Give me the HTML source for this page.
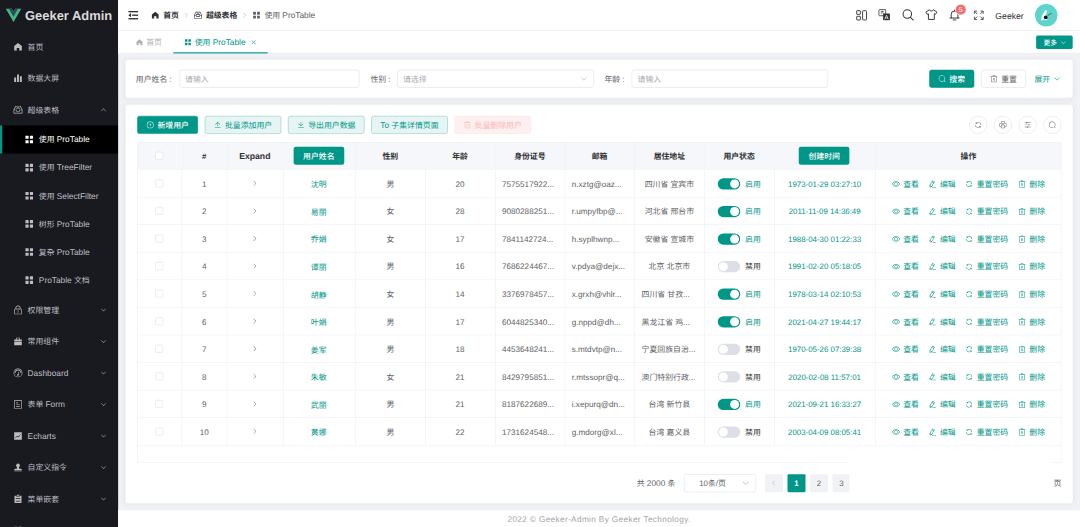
<!DOCTYPE html>
<html lang="zh-CN"><head><meta charset="utf-8"><title>Geeker Admin</title>
<style>
*{box-sizing:border-box;margin:0;padding:0}
html,body{width:1080px;height:527px;overflow:hidden;background:#fff}
body{text-rendering:geometricPrecision;font-family:"Liberation Sans","Noto Sans CJK SC",sans-serif;font-size:14px;color:#303133}
#app{position:absolute;left:0;top:0;width:1920px;height:937px;transform:scale(.5625);transform-origin:0 0;display:flex;overflow:hidden;background:#f0f2f5}
.ic{display:inline-block;vertical-align:middle;flex:none}
/* sidebar */
.aside{width:210px;height:937px;background:#191a20;flex:none;overflow:hidden}
.logo{height:55px;display:flex;align-items:center;justify-content:center}
.logo span{font-size:23px;font-weight:bold;color:#dadada;margin-left:6px;white-space:nowrap}
.mi{height:56px;display:flex;align-items:center;padding:0 20px;color:#bdbdc0;position:relative;white-space:nowrap}
.mi .mic{margin:0 8px 0 3px;width:18px;height:18px}
.mi.sub{height:50px;padding-left:40px}
.mi.act{background:#000;color:#fff}
.mi.act:before{content:"";position:absolute;left:0;top:0;bottom:0;width:4px;background:#009688}
.mi .marrow{position:absolute;right:20px;top:50%;margin-top:-6px}
/* right */
.right{flex:1;display:flex;flex-direction:column;min-width:0;height:937px}
.header{height:55px;background:#fff;border-bottom:1px solid #e4e7ed;display:flex;align-items:center;justify-content:space-between;padding:0 15px 0 18px;flex:none}
.hl{display:flex;align-items:center}
.bc{display:flex;align-items:center;margin-left:22px}
.bc .it{display:flex;align-items:center;color:#303133;font-weight:bold}
.bc .it .ic{margin-right:6px}
.bc .it.last{color:#606266;font-weight:normal}
.bc .sep{margin:0 7px;color:#a8abb2;display:flex}
.hr{display:flex;align-items:center;padding-right:25px}
.hr .hi{width:22px;height:22px;margin-left:20px;color:#303133;position:relative;top:-1.5px}
.hr .user{position:relative;top:1.5px;font-size:15.4px;margin:0 20px 0 19px;color:#303133}
.hr .avatar{width:40px;height:40px;border-radius:50%;background:#5fd4cd;position:relative;overflow:hidden}
.badge{position:absolute;left:11.5px;top:-7.5px;background:#f56c6c;color:#fff;border-radius:10px;height:20px;min-width:20px;font-size:12.5px;line-height:18px;text-align:center;border:1px solid #fff;padding:0 4px}
/* tabs */
.tabs{height:40px;background:#fff;display:flex;align-items:center;justify-content:space-between;padding:0 0 0 13px;flex:none;position:relative}
.tabs:after{content:"";position:absolute;left:0;right:0;bottom:0;height:1px;background:#e4e7ed}
.tab{height:40px;display:inline-flex;align-items:center;padding:0 19.7px 0 18px;color:#afafaf;position:relative}
.tab .ic{margin-right:5px}
.tab.act{color:#009688}
.tab.act:after{content:"";position:absolute;left:0;right:0;bottom:0;height:2px;background:#009688;z-index:1}
.tab .x{margin-left:8.4px;margin-right:0}
.more{margin-right:13px;height:24px;background:#009688;color:#fff;border-radius:3px;font-size:12px;display:flex;align-items:center;padding:0 11px 0 13px}
.more .ic{margin-left:6px}
/* main */
.main{flex:1;padding:10px 12px;display:flex;flex-direction:column;min-height:0}
.card{background:#fff;border:1px solid #e4e7ed;border-radius:6px;box-shadow:0 0 12px rgba(0,0,0,.05)}
.search{height:70px;padding:18px 18px 0;display:flex;margin-bottom:10px;flex:none;position:relative}
.fi{display:flex;align-items:center;height:32px;position:absolute;top:18px}
.fi label{color:#606266;white-space:nowrap}
.inp{height:32px;border:1px solid #dcdfe6;border-radius:4px;display:flex;align-items:center;padding:0 9px;color:#a8abb2;position:absolute;top:18px}
.selarr{position:absolute;right:10px;top:8px;color:#a8abb2}
.ml{margin-left:5px}
.btn{vertical-align:top;height:32px;border-radius:4px;border:1px solid #dcdfe6;display:inline-flex;align-items:center;justify-content:center;padding:0 15px;color:#606266;background:#fff;white-space:nowrap}
.btn .ic{margin-right:6px}
.btn.pri{background:#009688;border-color:#009688;color:#fff}
.btn.plain{background:#e6f5f3;border-color:#80cbc4;color:#009688}
.btn.dang{background:#fef0f0;border-color:#fde2e2;color:#fab6b6}
.tcard{flex:1;padding:20px 20px 20px 21px;display:flex;flex-direction:column;position:relative;min-height:0}
.thead{display:flex;justify-content:space-between;margin-bottom:15px;height:32px;flex:none}
.thead .l .btn{margin-right:12px}
.cbtn{width:32px;height:32px;border-radius:50%;border:1px solid #dcdfe6;display:inline-flex;align-items:center;justify-content:center;margin-left:12px;color:#606266}
.twrap{flex:1;position:relative;min-height:0}
.twrap:after{content:"";position:absolute;left:0;top:0;right:0;bottom:0;border:1px solid #ebeef5;pointer-events:none}
table{border-collapse:collapse;table-layout:fixed;width:100%}
th,td{border-right:1px solid #ebeef5;border-bottom:1px solid #ebeef5;text-align:center;white-space:nowrap;overflow:hidden;padding:0}
th:last-child,td:last-child{border-right:none}
th{height:48px;background:#f5f7fa;font-weight:bold;color:#303133;font-size:14px}
td{height:49px;color:#606266;font-size:14px}
.cb{display:inline-block;width:14px;height:14px;border:1px solid #dcdfe6;border-radius:2px;background:#fff;vertical-align:middle}
.exp{color:#606266}
.lnk{color:#009688}
.dt{color:#009688}
.sw{display:inline-block;width:40px;height:20px;border-radius:10px;background:#dcdfe6;position:relative;vertical-align:middle}
.sw i{position:absolute;left:2px;top:2px;width:16px;height:16px;border-radius:50%;background:#fff}
.sw.on{background:#009688}
.sw.on i{left:22px}
.swl{margin-left:9px;vertical-align:middle;color:#303133}
.swl.on{color:#009688}
.op{color:#009688;margin:0 8.7px;display:inline-flex;align-items:center}
.op b{font-weight:normal;margin-left:6px}
.hbtn{display:inline-flex;height:32px;align-items:center;justify-content:center;width:90px;position:relative;left:-.7px;padding:0;background:#009688;color:#fff;border-radius:4px;font-weight:normal}
.pager{height:32px;margin-top:20.5px;display:flex;justify-content:flex-start;padding-left:888px;align-items:center;flex:none;color:#606266;position:relative}
.pager .total{width:84px;flex:none;white-space:nowrap}
.pager .sel{width:127.5px;flex:none;height:32px;border:1px solid #dcdfe6;border-radius:4px;display:flex;align-items:center;justify-content:center;position:relative;margin-right:12.5px}
.pager .pb{min-width:32px;flex:none;height:32px;background:#f0f2f5;border-radius:2px;margin:0 4px;display:flex;align-items:center;justify-content:center;color:#606266}
.pager .pb.act{background:#009688;color:#fff;font-weight:bold}
.pager .pb.dis{color:#a8abb2}
.cover{position:absolute;background:#fff}
.footer{height:31px;background:#fff;border-top:1px solid #e4e7ed;display:flex;align-items:center;justify-content:center;color:#a3a5aa;flex:none;font-size:14.6px;letter-spacing:.65px;padding-top:3px}

.en{font-size:1.06em}
td{padding-top:2px}
.num{font-size:14.45px;padding-top:4.5px}
.ell{text-align:left;padding-left:12px}
.lnk span{position:relative;top:1px;left:-1px}
.cb{position:relative;top:-1.7px}
.exp{position:relative;top:-1.6px}
.mi.lastmi span{position:relative;top:3px}
th .cb{top:-.5px}
.btn.pri,.hbtn,.more{font-weight:500}
.btn .en{position:relative;top:1px}

</style></head><body>
<div id="app">
<div class="aside"><div class="logo"><svg class="vlogo" viewBox="0 0 256 221" width="28" height="24.5"><path fill="#41b883" d="M204.8 0H256L128 220.8 0 0h97.92L128 51.2 157.44 0h47.36z"/><path fill="#35495e" d="M50.56 0 128 133.12 204.8 0h-47.36L128 51.2 97.92 0H50.56z"/></svg><span>Geeker Admin</span></div><div class="menu"><div class="mi"><svg class="ic mic" viewBox="0 0 1024 1024" width="18" height="18" style="" fill="currentColor"><path d="M512 128 128 447.9V896h255.9V640h256.2v256H896V447.9z"/></svg><span>首页</span></div><div class="mi"><svg class="ic mic" viewBox="0 0 1024 1024" width="18" height="18" style="" fill="currentColor"><path d="M416 896V128h192v768H416zm-288 0V448h192v448H128zm576 0V320h192v576H704z"/></svg><span>数据大屏</span></div><div class="mi"><svg class="ic mic" viewBox="0 0 1024 1024" width="18" height="18" style="" fill="currentColor"><path fill-rule="evenodd" d="M288 384h448v64H288v-64zm96-128h256v64H384v-64zM131.456 512H384v128h256V512h252.544L721.856 192H302.144L131.456 512zM896 576H704v128H320V576H128v256h768V576zM275.776 128h472.448a32 32 0 0 1 28.608 17.664l179.84 359.552A32 32 0 0 1 960 519.552V864a32 32 0 0 1-32 32H96a32 32 0 0 1-32-32V519.552a32 32 0 0 1 3.392-14.336l179.776-359.552A32 32 0 0 1 275.776 128z"/></svg><span>超级表格</span><svg class="ic marrow" viewBox="0 0 1024 1024" width="12" height="12" style="" fill="currentColor"><path d="m488.832 344.32-339.84 356.672a32 32 0 0 0 0 44.16l.384.384a29.44 29.44 0 0 0 42.688 0l320-335.872 319.872 335.872a29.44 29.44 0 0 0 42.688 0l.384-.384a32 32 0 0 0 0-44.16L535.168 344.32a32 32 0 0 0-46.336 0z"/></svg></div><div class="mi sub act"><svg class="ic mic" viewBox="0 0 1024 1024" width="18" height="18" style="" fill="currentColor"><path d="M160 448a32 32 0 0 1-32-32V160a32 32 0 0 1 32-32h256a32 32 0 0 1 32 32v256a32 32 0 0 1-32 32H160zm448 0a32 32 0 0 1-32-32V160a32 32 0 0 1 32-32h256a32 32 0 0 1 32 32v256a32 32 0 0 1-32 32H608zM160 896a32 32 0 0 1-32-32V608a32 32 0 0 1 32-32h256a32 32 0 0 1 32 32v256a32 32 0 0 1-32 32H160zm448 0a32 32 0 0 1-32-32V608a32 32 0 0 1 32-32h256a32 32 0 0 1 32 32v256a32 32 0 0 1-32 32H608z"/></svg><span>使用 <span class="en">ProTable</span></span></div><div class="mi sub"><svg class="ic mic" viewBox="0 0 1024 1024" width="18" height="18" style="" fill="currentColor"><path d="M160 448a32 32 0 0 1-32-32V160a32 32 0 0 1 32-32h256a32 32 0 0 1 32 32v256a32 32 0 0 1-32 32H160zm448 0a32 32 0 0 1-32-32V160a32 32 0 0 1 32-32h256a32 32 0 0 1 32 32v256a32 32 0 0 1-32 32H608zM160 896a32 32 0 0 1-32-32V608a32 32 0 0 1 32-32h256a32 32 0 0 1 32 32v256a32 32 0 0 1-32 32H160zm448 0a32 32 0 0 1-32-32V608a32 32 0 0 1 32-32h256a32 32 0 0 1 32 32v256a32 32 0 0 1-32 32H608z"/></svg><span>使用 <span class="en">TreeFilter</span></span></div><div class="mi sub"><svg class="ic mic" viewBox="0 0 1024 1024" width="18" height="18" style="" fill="currentColor"><path d="M160 448a32 32 0 0 1-32-32V160a32 32 0 0 1 32-32h256a32 32 0 0 1 32 32v256a32 32 0 0 1-32 32H160zm448 0a32 32 0 0 1-32-32V160a32 32 0 0 1 32-32h256a32 32 0 0 1 32 32v256a32 32 0 0 1-32 32H608zM160 896a32 32 0 0 1-32-32V608a32 32 0 0 1 32-32h256a32 32 0 0 1 32 32v256a32 32 0 0 1-32 32H160zm448 0a32 32 0 0 1-32-32V608a32 32 0 0 1 32-32h256a32 32 0 0 1 32 32v256a32 32 0 0 1-32 32H608z"/></svg><span>使用 <span class="en">SelectFilter</span></span></div><div class="mi sub"><svg class="ic mic" viewBox="0 0 1024 1024" width="18" height="18" style="" fill="currentColor"><path d="M160 448a32 32 0 0 1-32-32V160a32 32 0 0 1 32-32h256a32 32 0 0 1 32 32v256a32 32 0 0 1-32 32H160zm448 0a32 32 0 0 1-32-32V160a32 32 0 0 1 32-32h256a32 32 0 0 1 32 32v256a32 32 0 0 1-32 32H608zM160 896a32 32 0 0 1-32-32V608a32 32 0 0 1 32-32h256a32 32 0 0 1 32 32v256a32 32 0 0 1-32 32H160zm448 0a32 32 0 0 1-32-32V608a32 32 0 0 1 32-32h256a32 32 0 0 1 32 32v256a32 32 0 0 1-32 32H608z"/></svg><span>树形 <span class="en">ProTable</span></span></div><div class="mi sub"><svg class="ic mic" viewBox="0 0 1024 1024" width="18" height="18" style="" fill="currentColor"><path d="M160 448a32 32 0 0 1-32-32V160a32 32 0 0 1 32-32h256a32 32 0 0 1 32 32v256a32 32 0 0 1-32 32H160zm448 0a32 32 0 0 1-32-32V160a32 32 0 0 1 32-32h256a32 32 0 0 1 32 32v256a32 32 0 0 1-32 32H608zM160 896a32 32 0 0 1-32-32V608a32 32 0 0 1 32-32h256a32 32 0 0 1 32 32v256a32 32 0 0 1-32 32H160zm448 0a32 32 0 0 1-32-32V608a32 32 0 0 1 32-32h256a32 32 0 0 1 32 32v256a32 32 0 0 1-32 32H608z"/></svg><span>复杂 <span class="en">ProTable</span></span></div><div class="mi sub"><svg class="ic mic" viewBox="0 0 1024 1024" width="18" height="18" style="" fill="currentColor"><path d="M160 448a32 32 0 0 1-32-32V160a32 32 0 0 1 32-32h256a32 32 0 0 1 32 32v256a32 32 0 0 1-32 32H160zm448 0a32 32 0 0 1-32-32V160a32 32 0 0 1 32-32h256a32 32 0 0 1 32 32v256a32 32 0 0 1-32 32H608zM160 896a32 32 0 0 1-32-32V608a32 32 0 0 1 32-32h256a32 32 0 0 1 32 32v256a32 32 0 0 1-32 32H160zm448 0a32 32 0 0 1-32-32V608a32 32 0 0 1 32-32h256a32 32 0 0 1 32 32v256a32 32 0 0 1-32 32H608z"/></svg><span><span class="en">ProTable</span> 文档</span></div><div class="mi"><svg class="ic mic" viewBox="0 0 1024 1024" width="18" height="18" style="" fill="currentColor"><path d="M224 448a32 32 0 0 0-32 32v384a32 32 0 0 0 32 32h576a32 32 0 0 0 32-32V480a32 32 0 0 0-32-32H224zm0-64h576a96 96 0 0 1 96 96v384a96 96 0 0 1-96 96H224a96 96 0 0 1-96-96V480a96 96 0 0 1 96-96z"/><path d="M512 544a32 32 0 0 1 32 32v192a32 32 0 1 1-64 0V576a32 32 0 0 1 32-32zm192-160v-64a192 192 0 1 0-384 0v64h384zM512 64a256 256 0 0 1 256 256v128H256V320A256 256 0 0 1 512 64z"/></svg><span>权限管理</span><svg class="ic marrow" viewBox="0 0 1024 1024" width="12" height="12" style="" fill="currentColor"><path d="M831.872 340.864 512 652.672 192.128 340.864a30.592 30.592 0 0 0-42.752 0 29.12 29.12 0 0 0 0 41.6L489.664 714.24a32 32 0 0 0 44.672 0l340.288-331.712a29.12 29.12 0 0 0 0-41.728 30.592 30.592 0 0 0-42.752 0z"/></svg></div><div class="mi"><svg class="ic mic" viewBox="0 0 1024 1024" width="18" height="18" style="" fill="currentColor"><path d="M320 320V128h384v192h192v192H128V320h192zM128 576h768v320H128V576zm256-256h256.064V192H384v128z"/></svg><span>常用组件</span><svg class="ic marrow" viewBox="0 0 1024 1024" width="12" height="12" style="" fill="currentColor"><path d="M831.872 340.864 512 652.672 192.128 340.864a30.592 30.592 0 0 0-42.752 0 29.12 29.12 0 0 0 0 41.6L489.664 714.24a32 32 0 0 0 44.672 0l340.288-331.712a29.12 29.12 0 0 0 0-41.728 30.592 30.592 0 0 0-42.752 0z"/></svg></div><div class="mi"><svg class="ic mic" viewBox="0 0 1024 1024" width="18" height="18" style="" fill="currentColor"><path d="M512 896a384 384 0 1 0 0-768 384 384 0 0 0 0 768zm0 64a448 448 0 1 1 0-896 448 448 0 0 1 0 896z"/><path d="M192 512a320 320 0 1 1 640 0 32 32 0 1 1-64 0 256 256 0 1 0-512 0 32 32 0 0 1-64 0z"/><path d="M570.432 627.84A96 96 0 1 1 509.568 608l60.992-187.776A32 32 0 1 1 631.424 440l-60.992 187.776zM502.08 734.464a32 32 0 1 0 19.84-60.928 32 32 0 0 0-19.84 60.928z"/></svg><span><span class="en">Dashboard</span></span><svg class="ic marrow" viewBox="0 0 1024 1024" width="12" height="12" style="" fill="currentColor"><path d="M831.872 340.864 512 652.672 192.128 340.864a30.592 30.592 0 0 0-42.752 0 29.12 29.12 0 0 0 0 41.6L489.664 714.24a32 32 0 0 0 44.672 0l340.288-331.712a29.12 29.12 0 0 0 0-41.728 30.592 30.592 0 0 0-42.752 0z"/></svg></div><div class="mi"><svg class="ic mic" viewBox="0 0 1024 1024" width="18" height="18" style="" fill="currentColor"><path d="M192 128v768h640V128H192zm-32-64h704a32 32 0 0 1 32 32v832a32 32 0 0 1-32 32H160a32 32 0 0 1-32-32V96a32 32 0 0 1 32-32zm160 448h384v64H320v-64zm0-192h192v64H320v-64zm0 384h384v64H320v-64z"/></svg><span>表单 <span class="en">Form</span></span><svg class="ic marrow" viewBox="0 0 1024 1024" width="12" height="12" style="" fill="currentColor"><path d="M831.872 340.864 512 652.672 192.128 340.864a30.592 30.592 0 0 0-42.752 0 29.12 29.12 0 0 0 0 41.6L489.664 714.24a32 32 0 0 0 44.672 0l340.288-331.712a29.12 29.12 0 0 0 0-41.728 30.592 30.592 0 0 0-42.752 0z"/></svg></div><div class="mi"><svg class="ic mic" viewBox="0 0 1024 1024" width="18" height="18" style="" fill="currentColor"><path d="M128 896V128h768v768H128zm291.712-327.296 128 102.4 180.16-201.792-47.744-42.624-139.84 156.608-128-102.4-180.16 201.792 47.744 42.624 139.84-156.608zM816 352a48 48 0 1 0-96 0 48 48 0 0 0 96 0z"/></svg><span><span class="en">Echarts</span></span><svg class="ic marrow" viewBox="0 0 1024 1024" width="12" height="12" style="" fill="currentColor"><path d="M831.872 340.864 512 652.672 192.128 340.864a30.592 30.592 0 0 0-42.752 0 29.12 29.12 0 0 0 0 41.6L489.664 714.24a32 32 0 0 0 44.672 0l340.288-331.712a29.12 29.12 0 0 0 0-41.728 30.592 30.592 0 0 0-42.752 0z"/></svg></div><div class="mi"><svg class="ic mic" viewBox="0 0 1024 1024" width="18" height="18" style="" fill="currentColor"><path d="M624 475.968V640h144a128 128 0 0 1 128 128H128a128 128 0 0 1 128-128h144V475.968a192 192 0 1 1 224 0zM128 896v-64h768v64H128z"/></svg><span>自定义指令</span><svg class="ic marrow" viewBox="0 0 1024 1024" width="12" height="12" style="" fill="currentColor"><path d="M831.872 340.864 512 652.672 192.128 340.864a30.592 30.592 0 0 0-42.752 0 29.12 29.12 0 0 0 0 41.6L489.664 714.24a32 32 0 0 0 44.672 0l340.288-331.712a29.12 29.12 0 0 0 0-41.728 30.592 30.592 0 0 0-42.752 0z"/></svg></div><div class="mi"><svg class="ic mic" viewBox="0 0 1024 1024" width="18" height="18" style="" fill="currentColor"><path d="M704 192h160v736H160V192h160v64h384v-64zM288 512h448v-64H288v64zm0 256h448v-64H288v64zm96-576V96h256v96H384z"/></svg><span>菜单嵌套</span><svg class="ic marrow" viewBox="0 0 1024 1024" width="12" height="12" style="" fill="currentColor"><path d="M831.872 340.864 512 652.672 192.128 340.864a30.592 30.592 0 0 0-42.752 0 29.12 29.12 0 0 0 0 41.6L489.664 714.24a32 32 0 0 0 44.672 0l340.288-331.712a29.12 29.12 0 0 0 0-41.728 30.592 30.592 0 0 0-42.752 0z"/></svg></div><div class="mi lastmi"><svg class="ic mic" viewBox="0 0 1024 1024" width="18" height="18" style="" fill="currentColor"><path d="M160 448a32 32 0 0 1-32-32V160a32 32 0 0 1 32-32h256a32 32 0 0 1 32 32v256a32 32 0 0 1-32 32H160zm448 0a32 32 0 0 1-32-32V160a32 32 0 0 1 32-32h256a32 32 0 0 1 32 32v256a32 32 0 0 1-32 32H608zM160 896a32 32 0 0 1-32-32V608a32 32 0 0 1 32-32h256a32 32 0 0 1 32 32v256a32 32 0 0 1-32 32H160zm448 0a32 32 0 0 1-32-32V608a32 32 0 0 1 32-32h256a32 32 0 0 1 32 32v256a32 32 0 0 1-32 32H608z"/></svg><span>外部链接</span><svg class="ic marrow" viewBox="0 0 1024 1024" width="12" height="12" style="" fill="currentColor"><path d="M831.872 340.864 512 652.672 192.128 340.864a30.592 30.592 0 0 0-42.752 0 29.12 29.12 0 0 0 0 41.6L489.664 714.24a32 32 0 0 0 44.672 0l340.288-331.712a29.12 29.12 0 0 0 0-41.728 30.592 30.592 0 0 0-42.752 0z"/></svg></div></div></div>
<div class="right">
<div class="header">
 <div class="hl">
  <svg class="ic" viewBox="0 0 18 18" width="18" height="18" fill="#303133"><rect x="0" y="1.5" width="18" height="2.4"/><rect x="7" y="7.8" width="11" height="2.4"/><rect x="0" y="14.1" width="18" height="2.4"/><path d="M0 9 5 5.2v7.6z"/></svg>
  <div class="bc">
   <span class="it"><svg class="ic " viewBox="0 0 1024 1024" width="16" height="16" style="" fill="currentColor"><path d="M512 128 128 447.9V896h255.9V640h256.2v256H896V447.9z"/></svg><span>首页</span></span><span class="sep"><svg class="ic " viewBox="0 0 1024 1024" width="12" height="12" style="" fill="currentColor"><path d="M340.864 149.312a30.592 30.592 0 0 0 0 42.752L652.736 512 340.864 831.872a30.592 30.592 0 0 0 0 42.752 29.12 29.12 0 0 0 41.728 0L714.24 534.336a32 32 0 0 0 0-44.672L382.592 149.376a29.12 29.12 0 0 0-41.728 0z"/></svg></span>
   <span class="it"><svg class="ic " viewBox="0 0 1024 1024" width="16" height="16" style="" fill="currentColor"><path fill-rule="evenodd" d="M288 384h448v64H288v-64zm96-128h256v64H384v-64zM131.456 512H384v128h256V512h252.544L721.856 192H302.144L131.456 512zM896 576H704v128H320V576H128v256h768V576zM275.776 128h472.448a32 32 0 0 1 28.608 17.664l179.84 359.552A32 32 0 0 1 960 519.552V864a32 32 0 0 1-32 32H96a32 32 0 0 1-32-32V519.552a32 32 0 0 1 3.392-14.336l179.776-359.552A32 32 0 0 1 275.776 128z"/></svg><span>超级表格</span></span><span class="sep"><svg class="ic " viewBox="0 0 1024 1024" width="12" height="12" style="" fill="currentColor"><path d="M340.864 149.312a30.592 30.592 0 0 0 0 42.752L652.736 512 340.864 831.872a30.592 30.592 0 0 0 0 42.752 29.12 29.12 0 0 0 41.728 0L714.24 534.336a32 32 0 0 0 0-44.672L382.592 149.376a29.12 29.12 0 0 0-41.728 0z"/></svg></span>
   <span class="it last"><svg class="ic " viewBox="0 0 1024 1024" width="16" height="16" style="" fill="currentColor"><path d="M160 448a32 32 0 0 1-32-32V160a32 32 0 0 1 32-32h256a32 32 0 0 1 32 32v256a32 32 0 0 1-32 32H160zm448 0a32 32 0 0 1-32-32V160a32 32 0 0 1 32-32h256a32 32 0 0 1 32 32v256a32 32 0 0 1-32 32H608zM160 896a32 32 0 0 1-32-32V608a32 32 0 0 1 32-32h256a32 32 0 0 1 32 32v256a32 32 0 0 1-32 32H160zm448 0a32 32 0 0 1-32-32V608a32 32 0 0 1 32-32h256a32 32 0 0 1 32 32v256a32 32 0 0 1-32 32H608z"/></svg><span>使用 <span class="en">ProTable</span></span></span>
  </div>
 </div>
 <div class="hr">
  <span class="hi"><svg viewBox="0 0 22 22" width="22" height="22" style="overflow:visible" fill="none" stroke="#303133" stroke-width="1.600"><rect x="4" y="4" width="6.5" height="6.5" rx=".7"/><rect x="4" y="14" width="6.500" height="6.500" rx=".7"/><rect x="14.500" y="4" width="7" height="16.500" rx="1.5"/></svg></span>
  <span class="hi"><svg viewBox="0 0 22 22" width="22" height="22"><rect x="1.5" y="2" width="12" height="11" rx="1" fill="#fff" stroke="#303133" stroke-width="1.4"/><path d="M4.5 5.5h6M7.5 4v1.5M5 10l2.5-4.5L10 10" stroke="#303133" stroke-width="1" fill="none"/><rect x="9" y="9" width="12" height="12" rx=".7" fill="#303133"/><path d="M12 19l3-7 3 7M13 17h4" stroke="#fff" stroke-width="1.3" fill="none"/></svg></span>
  <span class="hi"><svg viewBox="0 0 22 22" width="22" height="22" fill="none" stroke="#303133" stroke-width="1.8"><circle cx="10" cy="10" r="7.6"/><path d="M15.6 15.8 20.5 20.8" stroke-linecap="round"/></svg></span>
  <span class="hi"><svg viewBox="0 0 22 22" width="22" height="22" fill="none" stroke="#303133" stroke-width="1.7" stroke-linejoin="round"><path d="M7 2.500 .800 6.500 3.500 10.500 5.500 9.500V19.500H16V9.500L18 10.500 20.700 6.500 14.500 2.500C13.500 5 8 5 7 2.500Z"/></svg></span>
  <span class="hi"><svg viewBox="0 0 22 22" width="22" height="22" fill="none" stroke="#303133" stroke-width="1.7" stroke-linecap="round" stroke-linejoin="round"><path d="M2 17h16M4 17V10.500a6 6 0 0 1 12 0V17M10 3V4.500M7.500 20.500h5"/></svg><span class="badge">5</span></span>
  <span class="hi"><svg viewBox="0 0 22 22" width="22" height="22" fill="none" stroke="#303133" stroke-width="1.6"><g transform="translate(1.500 2.600) scale(.87)"><path d="M2 8V2.5h5.5M2.5 3 8 8.5M14.500 2.5H20V8M19.500 3 14 8.500M20 14v5.500h-5.500M19.500 19 14 13.500M7.500 19.500H2V14M2.500 19 8 13.500"/></g></svg></span>
  <span class="user">Geeker</span>
  <span class="avatar"><svg viewBox="0 0 40 40" width="40" height="40"><path d="M18.500 10.500 21.500 13 19.500 19 21.500 29H17.500L16 26 14.500 29H10.500L12.500 21Z" fill="#fff"/><circle cx="19" cy="23.800" r="3.300" fill="#111"/><path d="M22.500 20.600 29.200 16.600" stroke="#222" stroke-width="1.100" fill="none"/></svg></span>
 </div>
</div>
<div class="tabs">
 <div>
  <span class="tab"><svg class="ic " viewBox="0 0 1024 1024" width="14" height="14" style="" fill="currentColor"><path d="M512 128 128 447.9V896h255.9V640h256.2v256H896V447.9z"/></svg><span>首页</span></span><span class="tab act" style="padding:0 19.1px 0 19.5px"><svg class="ic " viewBox="0 0 1024 1024" width="14" height="14" style="" fill="currentColor"><path d="M160 448a32 32 0 0 1-32-32V160a32 32 0 0 1 32-32h256a32 32 0 0 1 32 32v256a32 32 0 0 1-32 32H160zm448 0a32 32 0 0 1-32-32V160a32 32 0 0 1 32-32h256a32 32 0 0 1 32 32v256a32 32 0 0 1-32 32H608zM160 896a32 32 0 0 1-32-32V608a32 32 0 0 1 32-32h256a32 32 0 0 1 32 32v256a32 32 0 0 1-32 32H160zm448 0a32 32 0 0 1-32-32V608a32 32 0 0 1 32-32h256a32 32 0 0 1 32 32v256a32 32 0 0 1-32 32H608z"/></svg><span>使用 <span class="en">ProTable</span></span><svg class="ic x" viewBox="0 0 1024 1024" width="12" height="12" style="" fill="currentColor"><path d="M764.288 214.592 512 466.88 259.712 214.592a31.936 31.936 0 0 0-45.12 45.12L466.752 512 214.528 764.224a31.936 31.936 0 1 0 45.12 45.184L512 557.184l252.288 252.288a31.936 31.936 0 0 0 45.12-45.12L557.12 512.064l252.288-252.352a31.936 31.936 0 1 0-45.12-45.184z"/></svg></span>
 </div>
 <div class="more">更多<svg class="ic " viewBox="0 0 1024 1024" width="11" height="11" style="" fill="currentColor"><path d="M831.872 340.864 512 652.672 192.128 340.864a30.592 30.592 0 0 0-42.752 0 29.12 29.12 0 0 0 0 41.6L489.664 714.24a32 32 0 0 0 44.672 0l340.288-331.712a29.12 29.12 0 0 0 0-41.728 30.592 30.592 0 0 0-42.752 0z"/></svg></div>
</div>

<div class="main">
 <div class="card search">
  <div class="fi" style="left:18.5px"><label>用户姓名 :</label></div><div class="inp" style="left:96px;width:320px">请输入</div>
  <div class="fi" style="left:435.5px"><label>性别 :</label></div><div class="inp" style="left:483.3px;width:350px">请选择<svg class="ic selarr" viewBox="0 0 1024 1024" width="14" height="14" style="" fill="currentColor"><path d="M831.872 340.864 512 652.672 192.128 340.864a30.592 30.592 0 0 0-42.752 0 29.12 29.12 0 0 0 0 41.6L489.664 714.24a32 32 0 0 0 44.672 0l340.288-331.712a29.12 29.12 0 0 0 0-41.728 30.592 30.592 0 0 0-42.752 0z"/></svg></div>
  <div class="fi" style="left:851.5px"><label>年龄 :</label></div><div class="inp" style="left:900.4px;width:348.4px">请输入</div>
  <span class="btn pri" style="position:absolute;top:18px;left:1428.6px;width:80px;padding:0"><svg class="ic " viewBox="0 0 1024 1024" width="14" height="14" style="" fill="currentColor"><path d="m795.904 750.72 124.992 124.928a32 32 0 0 1-45.248 45.248L750.656 795.904a416 416 0 1 1 45.248-45.248zM480 832a352 352 0 1 0 0-704 352 352 0 0 0 0 704z"/></svg>搜索</span>
  <span class="btn" style="position:absolute;top:18px;left:1521px;width:79.6px;padding:0"><svg class="ic " viewBox="0 0 1024 1024" width="14" height="14" style="" fill="currentColor"><path d="M160 256H96a32 32 0 0 1 0-64h256V95.936a32 32 0 0 1 32-32h256a32 32 0 0 1 32 32V192h256a32 32 0 1 1 0 64h-64v672a32 32 0 0 1-32 32H192a32 32 0 0 1-32-32V256zm448-64v-64H416v64h192zM224 896h576V256H224v640zm192-128a32 32 0 0 1-32-32V416a32 32 0 0 1 64 0v320a32 32 0 0 1-32 32zm192 0a32 32 0 0 1-32-32V416a32 32 0 0 1 64 0v320a32 32 0 0 1-32 32z"/></svg>重置</span>
  <span style="position:absolute;top:18px;height:32px;left:1616px;color:#009688;display:inline-flex;align-items:center">展开<svg class="ic ml" viewBox="0 0 1024 1024" width="14" height="14" style="" fill="currentColor"><path d="M831.872 340.864 512 652.672 192.128 340.864a30.592 30.592 0 0 0-42.752 0 29.12 29.12 0 0 0 0 41.6L489.664 714.24a32 32 0 0 0 44.672 0l340.288-331.712a29.12 29.12 0 0 0 0-41.728 30.592 30.592 0 0 0-42.752 0z"/></svg></span>
 </div>
 <div class="card tcard">
  <div class="thead">
   <div class="l">
    <span class="btn pri"><svg class="ic " viewBox="0 0 1024 1024" width="14" height="14" style="" fill="currentColor"><path d="M352 480h320a32 32 0 1 1 0 64H352a32 32 0 0 1 0-64z"/><path d="M480 672V352a32 32 0 1 1 64 0v320a32 32 0 0 1-64 0z"/><path d="M512 896a384 384 0 1 0 0-768 384 384 0 0 0 0 768zm0 64a448 448 0 1 1 0-896 448 448 0 0 1 0 896z"/></svg>新增用户</span><span class="btn plain"><svg class="ic " viewBox="0 0 1024 1024" width="14" height="14" style="" fill="currentColor"><path d="M160 832h704a32 32 0 1 1 0 64H160a32 32 0 1 1 0-64zm384-578.304V704h-64V247.296L237.248 490.048 192 444.8 508.8 128l316.8 316.8-45.312 45.248L544 253.696z"/></svg>批量添加用户</span><span class="btn plain"><svg class="ic " viewBox="0 0 1024 1024" width="14" height="14" style="" fill="currentColor"><path d="M160 832h704a32 32 0 1 1 0 64H160a32 32 0 1 1 0-64zm384-253.696 236.288-236.352 45.248 45.248L508.8 704 192 387.2l45.248-45.248L480 584.704V128h64v450.304z"/></svg>导出用户数据</span><span class="btn plain"><span class="en">To</span>&nbsp;子集详情页面</span><span class="btn dang"><svg class="ic " viewBox="0 0 1024 1024" width="14" height="14" style="" fill="currentColor"><path d="M160 256H96a32 32 0 0 1 0-64h256V95.936a32 32 0 0 1 32-32h256a32 32 0 0 1 32 32V192h256a32 32 0 1 1 0 64h-64v672a32 32 0 0 1-32 32H192a32 32 0 0 1-32-32V256zm448-64v-64H416v64h192zM224 896h576V256H224v640zm192-128a32 32 0 0 1-32-32V416a32 32 0 0 1 64 0v320a32 32 0 0 1-32 32zm192 0a32 32 0 0 1-32-32V416a32 32 0 0 1 64 0v320a32 32 0 0 1-32 32z"/></svg>批量删除用户</span>
   </div>
   <div class="r">
    <span class="cbtn"><svg class="ic " viewBox="0 0 1024 1024" width="14" height="14" style="" fill="currentColor"><path d="M771.776 794.88A384 384 0 0 1 128 512h64a320 320 0 0 0 555.712 216.448H654.72a32 32 0 1 1 0-64h149.056a32 32 0 0 1 32 32v148.928a32 32 0 1 1-64 0v-50.56zM276.288 295.616h92.992a32 32 0 0 1 0 64H220.16a32 32 0 0 1-32-32V178.56a32 32 0 0 1 64 0v50.56A384 384 0 0 1 896.128 512h-64a320 320 0 0 0-555.776-216.384z"/></svg></span><span class="cbtn"><svg class="ic " viewBox="0 0 1024 1024" width="14" height="14" style="" fill="currentColor"><path d="M256 768H105.024c-14.272 0-19.456-1.472-24.64-4.288a29.056 29.056 0 0 1-12.16-12.096C65.536 746.432 64 741.248 64 727.04V379.072c0-42.816 4.48-58.304 12.8-73.984 8.384-15.616 20.672-27.904 36.288-36.288 15.68-8.32 31.168-12.8 73.984-12.8H256V64h512v192h68.928c42.816 0 58.304 4.48 73.984 12.8 15.616 8.384 27.904 20.672 36.288 36.288 8.32 15.68 12.8 31.168 12.8 73.984v347.904c0 14.272-1.472 19.456-4.288 24.64a29.056 29.056 0 0 1-12.096 12.16c-5.184 2.752-10.368 4.224-24.64 4.224H768v192H256V768zm64-192v320h384V576H320zm-64 128V512h512v192h128V379.072c0-29.376-1.408-36.48-5.248-43.776a23.296 23.296 0 0 0-10.048-10.048c-7.232-3.84-14.4-5.248-43.776-5.248H187.072c-29.376 0-36.48 1.408-43.776 5.248a23.296 23.296 0 0 0-10.048 10.048c-3.84 7.232-5.248 14.4-5.248 43.776V704h128zm64-448h384V128H320v128zm-64 128h64v64h-64v-64zm128 0h256v64H384v-64z"/></svg></span><span class="cbtn"><svg class="ic " viewBox="0 0 1024 1024" width="14" height="14" style="" fill="currentColor"><path d="M389.44 768a96.064 96.064 0 0 1 181.12 0H896v64H570.56a96.064 96.064 0 0 1-181.12 0H128v-64h261.44zm192-288a96.064 96.064 0 0 1 181.12 0H896v64H762.56a96.064 96.064 0 0 1-181.12 0H128v-64h453.44zm-320-288a96.064 96.064 0 0 1 181.12 0H896v64H442.56a96.064 96.064 0 0 1-181.12 0H128v-64h133.44z"/></svg></span><span class="cbtn"><svg class="ic " viewBox="0 0 1024 1024" width="14" height="14" style="" fill="currentColor"><path d="m795.904 750.72 124.992 124.928a32 32 0 0 1-45.248 45.248L750.656 795.904a416 416 0 1 1 45.248-45.248zM480 832a352 352 0 1 0 0-704 352 352 0 0 0 0 704z"/></svg></span>
   </div>
  </div>
  <div class="twrap">
   <table>
    <colgroup><col style="width:79px"><col style="width:80px"><col style="width:100px"><col style="width:129px"><col style="width:124px"><col style="width:124px"><col style="width:124px"><col style="width:124px"><col style="width:124px"><col style="width:124px"><col style="width:180px"><col style="width:331px"></colgroup>
    <thead><tr><th><span class="cb"></span></th><th>#</th><th><span style="font-size:15.4px;position:relative;top:2.4px">Expand</span></th><th><span class="hbtn">用户姓名</span></th><th>性别</th><th>年龄</th><th>身份证号</th><th>邮箱</th><th>居住地址</th><th>用户状态</th><th><span class="hbtn">创建时间</span></th><th>操作</th></tr></thead>
    <tbody><tr><td><span class="cb"></span></td><td class="num">1</td><td><svg class="ic exp" viewBox="0 0 1024 1024" width="12" height="12" style="" fill="currentColor"><path d="M340.864 149.312a30.592 30.592 0 0 0 0 42.752L652.736 512 340.864 831.872a30.592 30.592 0 0 0 0 42.752 29.12 29.12 0 0 0 41.728 0L714.24 534.336a32 32 0 0 0 0-44.672L382.592 149.376a29.12 29.12 0 0 0-41.728 0z"/></svg></td><td class="lnk"><span>沈明</span></td><td>男</td><td class="num">20</td><td class="num ell">7575517922...</td><td class="num ell">n.xztg@oaz...</td><td class="">四川省 宜宾市</td><td class="swc"><span class="sw on"><i></i></span><span class="swl on">启用</span></td><td class="dt">1973-01-29 03:27:10</td><td class="opc"><span class="op"><svg class="ic " viewBox="0 0 1024 1024" width="14" height="14" style="" fill="currentColor"><path d="M512 160c320 0 512 352 512 352S832 864 512 864 0 512 0 512s192-352 512-352zm0 64c-225.28 0-384.128 208.064-436.8 288 52.608 79.872 211.456 288 436.8 288 225.28 0 384.128-208.064 436.8-288-52.608-79.872-211.456-288-436.8-288zm0 64a224 224 0 1 1 0 448 224 224 0 0 1 0-448zm0 64a160.192 160.192 0 0 0-160 160c0 88.192 71.744 160 160 160s160-71.808 160-160-71.744-160-160-160z"/></svg><b>查看</b></span><span class="op"><svg class="ic " viewBox="0 0 1024 1024" width="14" height="14" style="" fill="currentColor"><path d="m199.04 672.64 193.984 112 224-387.968-193.92-112-224 388.032zm-23.872 60.16 32.896 148.288 144.896-45.696L175.168 732.8zM455.04 229.248l193.92 112 56.704-98.112-193.984-112-56.64 98.112zM104.32 708.8l384-665.024 304.768 175.936L409.152 884.8h.064l-248.448 78.336L104.32 708.8zm384 254.272v-64h448v64h-448z"/></svg><b>编辑</b></span><span class="op"><svg class="ic " viewBox="0 0 1024 1024" width="14" height="14" style="" fill="currentColor"><path d="M771.776 794.88A384 384 0 0 1 128 512h64a320 320 0 0 0 555.712 216.448H654.72a32 32 0 1 1 0-64h149.056a32 32 0 0 1 32 32v148.928a32 32 0 1 1-64 0v-50.56zM276.288 295.616h92.992a32 32 0 0 1 0 64H220.16a32 32 0 0 1-32-32V178.56a32 32 0 0 1 64 0v50.56A384 384 0 0 1 896.128 512h-64a320 320 0 0 0-555.776-216.384z"/></svg><b>重置密码</b></span><span class="op"><svg class="ic " viewBox="0 0 1024 1024" width="14" height="14" style="" fill="currentColor"><path d="M160 256H96a32 32 0 0 1 0-64h256V95.936a32 32 0 0 1 32-32h256a32 32 0 0 1 32 32V192h256a32 32 0 1 1 0 64h-64v672a32 32 0 0 1-32 32H192a32 32 0 0 1-32-32V256zm448-64v-64H416v64h192zM224 896h576V256H224v640zm192-128a32 32 0 0 1-32-32V416a32 32 0 0 1 64 0v320a32 32 0 0 1-32 32zm192 0a32 32 0 0 1-32-32V416a32 32 0 0 1 64 0v320a32 32 0 0 1-32 32z"/></svg><b>删除</b></span></td></tr><tr><td><span class="cb"></span></td><td class="num">2</td><td><svg class="ic exp" viewBox="0 0 1024 1024" width="12" height="12" style="" fill="currentColor"><path d="M340.864 149.312a30.592 30.592 0 0 0 0 42.752L652.736 512 340.864 831.872a30.592 30.592 0 0 0 0 42.752 29.12 29.12 0 0 0 41.728 0L714.24 534.336a32 32 0 0 0 0-44.672L382.592 149.376a29.12 29.12 0 0 0-41.728 0z"/></svg></td><td class="lnk"><span>易丽</span></td><td>女</td><td class="num">28</td><td class="num ell">9080288251...</td><td class="num ell">r.umpyfbp@...</td><td class="">河北省 邢台市</td><td class="swc"><span class="sw on"><i></i></span><span class="swl on">启用</span></td><td class="dt">2011-11-09 14:36:49</td><td class="opc"><span class="op"><svg class="ic " viewBox="0 0 1024 1024" width="14" height="14" style="" fill="currentColor"><path d="M512 160c320 0 512 352 512 352S832 864 512 864 0 512 0 512s192-352 512-352zm0 64c-225.28 0-384.128 208.064-436.8 288 52.608 79.872 211.456 288 436.8 288 225.28 0 384.128-208.064 436.8-288-52.608-79.872-211.456-288-436.8-288zm0 64a224 224 0 1 1 0 448 224 224 0 0 1 0-448zm0 64a160.192 160.192 0 0 0-160 160c0 88.192 71.744 160 160 160s160-71.808 160-160-71.744-160-160-160z"/></svg><b>查看</b></span><span class="op"><svg class="ic " viewBox="0 0 1024 1024" width="14" height="14" style="" fill="currentColor"><path d="m199.04 672.64 193.984 112 224-387.968-193.92-112-224 388.032zm-23.872 60.16 32.896 148.288 144.896-45.696L175.168 732.8zM455.04 229.248l193.92 112 56.704-98.112-193.984-112-56.64 98.112zM104.32 708.8l384-665.024 304.768 175.936L409.152 884.8h.064l-248.448 78.336L104.32 708.8zm384 254.272v-64h448v64h-448z"/></svg><b>编辑</b></span><span class="op"><svg class="ic " viewBox="0 0 1024 1024" width="14" height="14" style="" fill="currentColor"><path d="M771.776 794.88A384 384 0 0 1 128 512h64a320 320 0 0 0 555.712 216.448H654.72a32 32 0 1 1 0-64h149.056a32 32 0 0 1 32 32v148.928a32 32 0 1 1-64 0v-50.56zM276.288 295.616h92.992a32 32 0 0 1 0 64H220.16a32 32 0 0 1-32-32V178.56a32 32 0 0 1 64 0v50.56A384 384 0 0 1 896.128 512h-64a320 320 0 0 0-555.776-216.384z"/></svg><b>重置密码</b></span><span class="op"><svg class="ic " viewBox="0 0 1024 1024" width="14" height="14" style="" fill="currentColor"><path d="M160 256H96a32 32 0 0 1 0-64h256V95.936a32 32 0 0 1 32-32h256a32 32 0 0 1 32 32V192h256a32 32 0 1 1 0 64h-64v672a32 32 0 0 1-32 32H192a32 32 0 0 1-32-32V256zm448-64v-64H416v64h192zM224 896h576V256H224v640zm192-128a32 32 0 0 1-32-32V416a32 32 0 0 1 64 0v320a32 32 0 0 1-32 32zm192 0a32 32 0 0 1-32-32V416a32 32 0 0 1 64 0v320a32 32 0 0 1-32 32z"/></svg><b>删除</b></span></td></tr><tr><td><span class="cb"></span></td><td class="num">3</td><td><svg class="ic exp" viewBox="0 0 1024 1024" width="12" height="12" style="" fill="currentColor"><path d="M340.864 149.312a30.592 30.592 0 0 0 0 42.752L652.736 512 340.864 831.872a30.592 30.592 0 0 0 0 42.752 29.12 29.12 0 0 0 41.728 0L714.24 534.336a32 32 0 0 0 0-44.672L382.592 149.376a29.12 29.12 0 0 0-41.728 0z"/></svg></td><td class="lnk"><span>乔娟</span></td><td>女</td><td class="num">17</td><td class="num ell">7841142724...</td><td class="num ell">h.syplhwnp...</td><td class="">安徽省 宣城市</td><td class="swc"><span class="sw on"><i></i></span><span class="swl on">启用</span></td><td class="dt">1988-04-30 01:22:33</td><td class="opc"><span class="op"><svg class="ic " viewBox="0 0 1024 1024" width="14" height="14" style="" fill="currentColor"><path d="M512 160c320 0 512 352 512 352S832 864 512 864 0 512 0 512s192-352 512-352zm0 64c-225.28 0-384.128 208.064-436.8 288 52.608 79.872 211.456 288 436.8 288 225.28 0 384.128-208.064 436.8-288-52.608-79.872-211.456-288-436.8-288zm0 64a224 224 0 1 1 0 448 224 224 0 0 1 0-448zm0 64a160.192 160.192 0 0 0-160 160c0 88.192 71.744 160 160 160s160-71.808 160-160-71.744-160-160-160z"/></svg><b>查看</b></span><span class="op"><svg class="ic " viewBox="0 0 1024 1024" width="14" height="14" style="" fill="currentColor"><path d="m199.04 672.64 193.984 112 224-387.968-193.92-112-224 388.032zm-23.872 60.16 32.896 148.288 144.896-45.696L175.168 732.8zM455.04 229.248l193.92 112 56.704-98.112-193.984-112-56.64 98.112zM104.32 708.8l384-665.024 304.768 175.936L409.152 884.8h.064l-248.448 78.336L104.32 708.8zm384 254.272v-64h448v64h-448z"/></svg><b>编辑</b></span><span class="op"><svg class="ic " viewBox="0 0 1024 1024" width="14" height="14" style="" fill="currentColor"><path d="M771.776 794.88A384 384 0 0 1 128 512h64a320 320 0 0 0 555.712 216.448H654.72a32 32 0 1 1 0-64h149.056a32 32 0 0 1 32 32v148.928a32 32 0 1 1-64 0v-50.56zM276.288 295.616h92.992a32 32 0 0 1 0 64H220.16a32 32 0 0 1-32-32V178.56a32 32 0 0 1 64 0v50.56A384 384 0 0 1 896.128 512h-64a320 320 0 0 0-555.776-216.384z"/></svg><b>重置密码</b></span><span class="op"><svg class="ic " viewBox="0 0 1024 1024" width="14" height="14" style="" fill="currentColor"><path d="M160 256H96a32 32 0 0 1 0-64h256V95.936a32 32 0 0 1 32-32h256a32 32 0 0 1 32 32V192h256a32 32 0 1 1 0 64h-64v672a32 32 0 0 1-32 32H192a32 32 0 0 1-32-32V256zm448-64v-64H416v64h192zM224 896h576V256H224v640zm192-128a32 32 0 0 1-32-32V416a32 32 0 0 1 64 0v320a32 32 0 0 1-32 32zm192 0a32 32 0 0 1-32-32V416a32 32 0 0 1 64 0v320a32 32 0 0 1-32 32z"/></svg><b>删除</b></span></td></tr><tr><td><span class="cb"></span></td><td class="num">4</td><td><svg class="ic exp" viewBox="0 0 1024 1024" width="12" height="12" style="" fill="currentColor"><path d="M340.864 149.312a30.592 30.592 0 0 0 0 42.752L652.736 512 340.864 831.872a30.592 30.592 0 0 0 0 42.752 29.12 29.12 0 0 0 41.728 0L714.24 534.336a32 32 0 0 0 0-44.672L382.592 149.376a29.12 29.12 0 0 0-41.728 0z"/></svg></td><td class="lnk"><span>谭丽</span></td><td>男</td><td class="num">16</td><td class="num ell">7686224467...</td><td class="num ell">v.pdya@dejx...</td><td class="">北京 北京市</td><td class="swc"><span class="sw "><i></i></span><span class="swl ">禁用</span></td><td class="dt">1991-02-20 05:18:05</td><td class="opc"><span class="op"><svg class="ic " viewBox="0 0 1024 1024" width="14" height="14" style="" fill="currentColor"><path d="M512 160c320 0 512 352 512 352S832 864 512 864 0 512 0 512s192-352 512-352zm0 64c-225.28 0-384.128 208.064-436.8 288 52.608 79.872 211.456 288 436.8 288 225.28 0 384.128-208.064 436.8-288-52.608-79.872-211.456-288-436.8-288zm0 64a224 224 0 1 1 0 448 224 224 0 0 1 0-448zm0 64a160.192 160.192 0 0 0-160 160c0 88.192 71.744 160 160 160s160-71.808 160-160-71.744-160-160-160z"/></svg><b>查看</b></span><span class="op"><svg class="ic " viewBox="0 0 1024 1024" width="14" height="14" style="" fill="currentColor"><path d="m199.04 672.64 193.984 112 224-387.968-193.92-112-224 388.032zm-23.872 60.16 32.896 148.288 144.896-45.696L175.168 732.8zM455.04 229.248l193.92 112 56.704-98.112-193.984-112-56.64 98.112zM104.32 708.8l384-665.024 304.768 175.936L409.152 884.8h.064l-248.448 78.336L104.32 708.8zm384 254.272v-64h448v64h-448z"/></svg><b>编辑</b></span><span class="op"><svg class="ic " viewBox="0 0 1024 1024" width="14" height="14" style="" fill="currentColor"><path d="M771.776 794.88A384 384 0 0 1 128 512h64a320 320 0 0 0 555.712 216.448H654.72a32 32 0 1 1 0-64h149.056a32 32 0 0 1 32 32v148.928a32 32 0 1 1-64 0v-50.56zM276.288 295.616h92.992a32 32 0 0 1 0 64H220.16a32 32 0 0 1-32-32V178.56a32 32 0 0 1 64 0v50.56A384 384 0 0 1 896.128 512h-64a320 320 0 0 0-555.776-216.384z"/></svg><b>重置密码</b></span><span class="op"><svg class="ic " viewBox="0 0 1024 1024" width="14" height="14" style="" fill="currentColor"><path d="M160 256H96a32 32 0 0 1 0-64h256V95.936a32 32 0 0 1 32-32h256a32 32 0 0 1 32 32V192h256a32 32 0 1 1 0 64h-64v672a32 32 0 0 1-32 32H192a32 32 0 0 1-32-32V256zm448-64v-64H416v64h192zM224 896h576V256H224v640zm192-128a32 32 0 0 1-32-32V416a32 32 0 0 1 64 0v320a32 32 0 0 1-32 32zm192 0a32 32 0 0 1-32-32V416a32 32 0 0 1 64 0v320a32 32 0 0 1-32 32z"/></svg><b>删除</b></span></td></tr><tr><td><span class="cb"></span></td><td class="num">5</td><td><svg class="ic exp" viewBox="0 0 1024 1024" width="12" height="12" style="" fill="currentColor"><path d="M340.864 149.312a30.592 30.592 0 0 0 0 42.752L652.736 512 340.864 831.872a30.592 30.592 0 0 0 0 42.752 29.12 29.12 0 0 0 41.728 0L714.24 534.336a32 32 0 0 0 0-44.672L382.592 149.376a29.12 29.12 0 0 0-41.728 0z"/></svg></td><td class="lnk"><span>胡静</span></td><td>女</td><td class="num">14</td><td class="num ell">3376978457...</td><td class="num ell">x.grxh@vhlr...</td><td class="ell">四川省 甘孜...</td><td class="swc"><span class="sw on"><i></i></span><span class="swl on">启用</span></td><td class="dt">1978-03-14 02:10:53</td><td class="opc"><span class="op"><svg class="ic " viewBox="0 0 1024 1024" width="14" height="14" style="" fill="currentColor"><path d="M512 160c320 0 512 352 512 352S832 864 512 864 0 512 0 512s192-352 512-352zm0 64c-225.28 0-384.128 208.064-436.8 288 52.608 79.872 211.456 288 436.8 288 225.28 0 384.128-208.064 436.8-288-52.608-79.872-211.456-288-436.8-288zm0 64a224 224 0 1 1 0 448 224 224 0 0 1 0-448zm0 64a160.192 160.192 0 0 0-160 160c0 88.192 71.744 160 160 160s160-71.808 160-160-71.744-160-160-160z"/></svg><b>查看</b></span><span class="op"><svg class="ic " viewBox="0 0 1024 1024" width="14" height="14" style="" fill="currentColor"><path d="m199.04 672.64 193.984 112 224-387.968-193.92-112-224 388.032zm-23.872 60.16 32.896 148.288 144.896-45.696L175.168 732.8zM455.04 229.248l193.92 112 56.704-98.112-193.984-112-56.64 98.112zM104.32 708.8l384-665.024 304.768 175.936L409.152 884.8h.064l-248.448 78.336L104.32 708.8zm384 254.272v-64h448v64h-448z"/></svg><b>编辑</b></span><span class="op"><svg class="ic " viewBox="0 0 1024 1024" width="14" height="14" style="" fill="currentColor"><path d="M771.776 794.88A384 384 0 0 1 128 512h64a320 320 0 0 0 555.712 216.448H654.72a32 32 0 1 1 0-64h149.056a32 32 0 0 1 32 32v148.928a32 32 0 1 1-64 0v-50.56zM276.288 295.616h92.992a32 32 0 0 1 0 64H220.16a32 32 0 0 1-32-32V178.56a32 32 0 0 1 64 0v50.56A384 384 0 0 1 896.128 512h-64a320 320 0 0 0-555.776-216.384z"/></svg><b>重置密码</b></span><span class="op"><svg class="ic " viewBox="0 0 1024 1024" width="14" height="14" style="" fill="currentColor"><path d="M160 256H96a32 32 0 0 1 0-64h256V95.936a32 32 0 0 1 32-32h256a32 32 0 0 1 32 32V192h256a32 32 0 1 1 0 64h-64v672a32 32 0 0 1-32 32H192a32 32 0 0 1-32-32V256zm448-64v-64H416v64h192zM224 896h576V256H224v640zm192-128a32 32 0 0 1-32-32V416a32 32 0 0 1 64 0v320a32 32 0 0 1-32 32zm192 0a32 32 0 0 1-32-32V416a32 32 0 0 1 64 0v320a32 32 0 0 1-32 32z"/></svg><b>删除</b></span></td></tr><tr><td><span class="cb"></span></td><td class="num">6</td><td><svg class="ic exp" viewBox="0 0 1024 1024" width="12" height="12" style="" fill="currentColor"><path d="M340.864 149.312a30.592 30.592 0 0 0 0 42.752L652.736 512 340.864 831.872a30.592 30.592 0 0 0 0 42.752 29.12 29.12 0 0 0 41.728 0L714.24 534.336a32 32 0 0 0 0-44.672L382.592 149.376a29.12 29.12 0 0 0-41.728 0z"/></svg></td><td class="lnk"><span>叶娟</span></td><td>男</td><td class="num">17</td><td class="num ell">6044825340...</td><td class="num ell">g.nppd@dh...</td><td class="ell">黑龙江省 鸡...</td><td class="swc"><span class="sw on"><i></i></span><span class="swl on">启用</span></td><td class="dt">2021-04-27 19:44:17</td><td class="opc"><span class="op"><svg class="ic " viewBox="0 0 1024 1024" width="14" height="14" style="" fill="currentColor"><path d="M512 160c320 0 512 352 512 352S832 864 512 864 0 512 0 512s192-352 512-352zm0 64c-225.28 0-384.128 208.064-436.8 288 52.608 79.872 211.456 288 436.8 288 225.28 0 384.128-208.064 436.8-288-52.608-79.872-211.456-288-436.8-288zm0 64a224 224 0 1 1 0 448 224 224 0 0 1 0-448zm0 64a160.192 160.192 0 0 0-160 160c0 88.192 71.744 160 160 160s160-71.808 160-160-71.744-160-160-160z"/></svg><b>查看</b></span><span class="op"><svg class="ic " viewBox="0 0 1024 1024" width="14" height="14" style="" fill="currentColor"><path d="m199.04 672.64 193.984 112 224-387.968-193.92-112-224 388.032zm-23.872 60.16 32.896 148.288 144.896-45.696L175.168 732.8zM455.04 229.248l193.92 112 56.704-98.112-193.984-112-56.64 98.112zM104.32 708.8l384-665.024 304.768 175.936L409.152 884.8h.064l-248.448 78.336L104.32 708.8zm384 254.272v-64h448v64h-448z"/></svg><b>编辑</b></span><span class="op"><svg class="ic " viewBox="0 0 1024 1024" width="14" height="14" style="" fill="currentColor"><path d="M771.776 794.88A384 384 0 0 1 128 512h64a320 320 0 0 0 555.712 216.448H654.72a32 32 0 1 1 0-64h149.056a32 32 0 0 1 32 32v148.928a32 32 0 1 1-64 0v-50.56zM276.288 295.616h92.992a32 32 0 0 1 0 64H220.16a32 32 0 0 1-32-32V178.56a32 32 0 0 1 64 0v50.56A384 384 0 0 1 896.128 512h-64a320 320 0 0 0-555.776-216.384z"/></svg><b>重置密码</b></span><span class="op"><svg class="ic " viewBox="0 0 1024 1024" width="14" height="14" style="" fill="currentColor"><path d="M160 256H96a32 32 0 0 1 0-64h256V95.936a32 32 0 0 1 32-32h256a32 32 0 0 1 32 32V192h256a32 32 0 1 1 0 64h-64v672a32 32 0 0 1-32 32H192a32 32 0 0 1-32-32V256zm448-64v-64H416v64h192zM224 896h576V256H224v640zm192-128a32 32 0 0 1-32-32V416a32 32 0 0 1 64 0v320a32 32 0 0 1-32 32zm192 0a32 32 0 0 1-32-32V416a32 32 0 0 1 64 0v320a32 32 0 0 1-32 32z"/></svg><b>删除</b></span></td></tr><tr><td><span class="cb"></span></td><td class="num">7</td><td><svg class="ic exp" viewBox="0 0 1024 1024" width="12" height="12" style="" fill="currentColor"><path d="M340.864 149.312a30.592 30.592 0 0 0 0 42.752L652.736 512 340.864 831.872a30.592 30.592 0 0 0 0 42.752 29.12 29.12 0 0 0 41.728 0L714.24 534.336a32 32 0 0 0 0-44.672L382.592 149.376a29.12 29.12 0 0 0-41.728 0z"/></svg></td><td class="lnk"><span>姜军</span></td><td>男</td><td class="num">18</td><td class="num ell">4453648241...</td><td class="num ell">s.mtdvtp@n...</td><td class="ell">宁夏回族自治...</td><td class="swc"><span class="sw "><i></i></span><span class="swl ">禁用</span></td><td class="dt">1970-05-26 07:39:38</td><td class="opc"><span class="op"><svg class="ic " viewBox="0 0 1024 1024" width="14" height="14" style="" fill="currentColor"><path d="M512 160c320 0 512 352 512 352S832 864 512 864 0 512 0 512s192-352 512-352zm0 64c-225.28 0-384.128 208.064-436.8 288 52.608 79.872 211.456 288 436.8 288 225.28 0 384.128-208.064 436.8-288-52.608-79.872-211.456-288-436.8-288zm0 64a224 224 0 1 1 0 448 224 224 0 0 1 0-448zm0 64a160.192 160.192 0 0 0-160 160c0 88.192 71.744 160 160 160s160-71.808 160-160-71.744-160-160-160z"/></svg><b>查看</b></span><span class="op"><svg class="ic " viewBox="0 0 1024 1024" width="14" height="14" style="" fill="currentColor"><path d="m199.04 672.64 193.984 112 224-387.968-193.92-112-224 388.032zm-23.872 60.16 32.896 148.288 144.896-45.696L175.168 732.8zM455.04 229.248l193.92 112 56.704-98.112-193.984-112-56.64 98.112zM104.32 708.8l384-665.024 304.768 175.936L409.152 884.8h.064l-248.448 78.336L104.32 708.8zm384 254.272v-64h448v64h-448z"/></svg><b>编辑</b></span><span class="op"><svg class="ic " viewBox="0 0 1024 1024" width="14" height="14" style="" fill="currentColor"><path d="M771.776 794.88A384 384 0 0 1 128 512h64a320 320 0 0 0 555.712 216.448H654.72a32 32 0 1 1 0-64h149.056a32 32 0 0 1 32 32v148.928a32 32 0 1 1-64 0v-50.56zM276.288 295.616h92.992a32 32 0 0 1 0 64H220.16a32 32 0 0 1-32-32V178.56a32 32 0 0 1 64 0v50.56A384 384 0 0 1 896.128 512h-64a320 320 0 0 0-555.776-216.384z"/></svg><b>重置密码</b></span><span class="op"><svg class="ic " viewBox="0 0 1024 1024" width="14" height="14" style="" fill="currentColor"><path d="M160 256H96a32 32 0 0 1 0-64h256V95.936a32 32 0 0 1 32-32h256a32 32 0 0 1 32 32V192h256a32 32 0 1 1 0 64h-64v672a32 32 0 0 1-32 32H192a32 32 0 0 1-32-32V256zm448-64v-64H416v64h192zM224 896h576V256H224v640zm192-128a32 32 0 0 1-32-32V416a32 32 0 0 1 64 0v320a32 32 0 0 1-32 32zm192 0a32 32 0 0 1-32-32V416a32 32 0 0 1 64 0v320a32 32 0 0 1-32 32z"/></svg><b>删除</b></span></td></tr><tr><td><span class="cb"></span></td><td class="num">8</td><td><svg class="ic exp" viewBox="0 0 1024 1024" width="12" height="12" style="" fill="currentColor"><path d="M340.864 149.312a30.592 30.592 0 0 0 0 42.752L652.736 512 340.864 831.872a30.592 30.592 0 0 0 0 42.752 29.12 29.12 0 0 0 41.728 0L714.24 534.336a32 32 0 0 0 0-44.672L382.592 149.376a29.12 29.12 0 0 0-41.728 0z"/></svg></td><td class="lnk"><span>朱敏</span></td><td>女</td><td class="num">21</td><td class="num ell">8429795851...</td><td class="num ell">r.mtssopr@q...</td><td class="ell">澳门特别行政...</td><td class="swc"><span class="sw "><i></i></span><span class="swl ">禁用</span></td><td class="dt">2020-02-08 11:57:01</td><td class="opc"><span class="op"><svg class="ic " viewBox="0 0 1024 1024" width="14" height="14" style="" fill="currentColor"><path d="M512 160c320 0 512 352 512 352S832 864 512 864 0 512 0 512s192-352 512-352zm0 64c-225.28 0-384.128 208.064-436.8 288 52.608 79.872 211.456 288 436.8 288 225.28 0 384.128-208.064 436.8-288-52.608-79.872-211.456-288-436.8-288zm0 64a224 224 0 1 1 0 448 224 224 0 0 1 0-448zm0 64a160.192 160.192 0 0 0-160 160c0 88.192 71.744 160 160 160s160-71.808 160-160-71.744-160-160-160z"/></svg><b>查看</b></span><span class="op"><svg class="ic " viewBox="0 0 1024 1024" width="14" height="14" style="" fill="currentColor"><path d="m199.04 672.64 193.984 112 224-387.968-193.92-112-224 388.032zm-23.872 60.16 32.896 148.288 144.896-45.696L175.168 732.8zM455.04 229.248l193.92 112 56.704-98.112-193.984-112-56.64 98.112zM104.32 708.8l384-665.024 304.768 175.936L409.152 884.8h.064l-248.448 78.336L104.32 708.8zm384 254.272v-64h448v64h-448z"/></svg><b>编辑</b></span><span class="op"><svg class="ic " viewBox="0 0 1024 1024" width="14" height="14" style="" fill="currentColor"><path d="M771.776 794.88A384 384 0 0 1 128 512h64a320 320 0 0 0 555.712 216.448H654.72a32 32 0 1 1 0-64h149.056a32 32 0 0 1 32 32v148.928a32 32 0 1 1-64 0v-50.56zM276.288 295.616h92.992a32 32 0 0 1 0 64H220.16a32 32 0 0 1-32-32V178.56a32 32 0 0 1 64 0v50.56A384 384 0 0 1 896.128 512h-64a320 320 0 0 0-555.776-216.384z"/></svg><b>重置密码</b></span><span class="op"><svg class="ic " viewBox="0 0 1024 1024" width="14" height="14" style="" fill="currentColor"><path d="M160 256H96a32 32 0 0 1 0-64h256V95.936a32 32 0 0 1 32-32h256a32 32 0 0 1 32 32V192h256a32 32 0 1 1 0 64h-64v672a32 32 0 0 1-32 32H192a32 32 0 0 1-32-32V256zm448-64v-64H416v64h192zM224 896h576V256H224v640zm192-128a32 32 0 0 1-32-32V416a32 32 0 0 1 64 0v320a32 32 0 0 1-32 32zm192 0a32 32 0 0 1-32-32V416a32 32 0 0 1 64 0v320a32 32 0 0 1-32 32z"/></svg><b>删除</b></span></td></tr><tr><td><span class="cb"></span></td><td class="num">9</td><td><svg class="ic exp" viewBox="0 0 1024 1024" width="12" height="12" style="" fill="currentColor"><path d="M340.864 149.312a30.592 30.592 0 0 0 0 42.752L652.736 512 340.864 831.872a30.592 30.592 0 0 0 0 42.752 29.12 29.12 0 0 0 41.728 0L714.24 534.336a32 32 0 0 0 0-44.672L382.592 149.376a29.12 29.12 0 0 0-41.728 0z"/></svg></td><td class="lnk"><span>武丽</span></td><td>男</td><td class="num">21</td><td class="num ell">8187622689...</td><td class="num ell">i.xepurq@dn...</td><td class="">台湾 新竹县</td><td class="swc"><span class="sw on"><i></i></span><span class="swl on">启用</span></td><td class="dt">2021-09-21 16:33:27</td><td class="opc"><span class="op"><svg class="ic " viewBox="0 0 1024 1024" width="14" height="14" style="" fill="currentColor"><path d="M512 160c320 0 512 352 512 352S832 864 512 864 0 512 0 512s192-352 512-352zm0 64c-225.28 0-384.128 208.064-436.8 288 52.608 79.872 211.456 288 436.8 288 225.28 0 384.128-208.064 436.8-288-52.608-79.872-211.456-288-436.8-288zm0 64a224 224 0 1 1 0 448 224 224 0 0 1 0-448zm0 64a160.192 160.192 0 0 0-160 160c0 88.192 71.744 160 160 160s160-71.808 160-160-71.744-160-160-160z"/></svg><b>查看</b></span><span class="op"><svg class="ic " viewBox="0 0 1024 1024" width="14" height="14" style="" fill="currentColor"><path d="m199.04 672.64 193.984 112 224-387.968-193.92-112-224 388.032zm-23.872 60.16 32.896 148.288 144.896-45.696L175.168 732.8zM455.04 229.248l193.92 112 56.704-98.112-193.984-112-56.64 98.112zM104.32 708.8l384-665.024 304.768 175.936L409.152 884.8h.064l-248.448 78.336L104.32 708.8zm384 254.272v-64h448v64h-448z"/></svg><b>编辑</b></span><span class="op"><svg class="ic " viewBox="0 0 1024 1024" width="14" height="14" style="" fill="currentColor"><path d="M771.776 794.88A384 384 0 0 1 128 512h64a320 320 0 0 0 555.712 216.448H654.72a32 32 0 1 1 0-64h149.056a32 32 0 0 1 32 32v148.928a32 32 0 1 1-64 0v-50.56zM276.288 295.616h92.992a32 32 0 0 1 0 64H220.16a32 32 0 0 1-32-32V178.56a32 32 0 0 1 64 0v50.56A384 384 0 0 1 896.128 512h-64a320 320 0 0 0-555.776-216.384z"/></svg><b>重置密码</b></span><span class="op"><svg class="ic " viewBox="0 0 1024 1024" width="14" height="14" style="" fill="currentColor"><path d="M160 256H96a32 32 0 0 1 0-64h256V95.936a32 32 0 0 1 32-32h256a32 32 0 0 1 32 32V192h256a32 32 0 1 1 0 64h-64v672a32 32 0 0 1-32 32H192a32 32 0 0 1-32-32V256zm448-64v-64H416v64h192zM224 896h576V256H224v640zm192-128a32 32 0 0 1-32-32V416a32 32 0 0 1 64 0v320a32 32 0 0 1-32 32zm192 0a32 32 0 0 1-32-32V416a32 32 0 0 1 64 0v320a32 32 0 0 1-32 32z"/></svg><b>删除</b></span></td></tr><tr><td><span class="cb"></span></td><td class="num">10</td><td><svg class="ic exp" viewBox="0 0 1024 1024" width="12" height="12" style="" fill="currentColor"><path d="M340.864 149.312a30.592 30.592 0 0 0 0 42.752L652.736 512 340.864 831.872a30.592 30.592 0 0 0 0 42.752 29.12 29.12 0 0 0 41.728 0L714.24 534.336a32 32 0 0 0 0-44.672L382.592 149.376a29.12 29.12 0 0 0-41.728 0z"/></svg></td><td class="lnk"><span>黄娜</span></td><td>男</td><td class="num">22</td><td class="num ell">1731624548...</td><td class="num ell">g.mdorg@xl...</td><td class="">台湾 嘉义县</td><td class="swc"><span class="sw "><i></i></span><span class="swl ">禁用</span></td><td class="dt">2003-04-09 08:05:41</td><td class="opc"><span class="op"><svg class="ic " viewBox="0 0 1024 1024" width="14" height="14" style="" fill="currentColor"><path d="M512 160c320 0 512 352 512 352S832 864 512 864 0 512 0 512s192-352 512-352zm0 64c-225.28 0-384.128 208.064-436.8 288 52.608 79.872 211.456 288 436.8 288 225.28 0 384.128-208.064 436.8-288-52.608-79.872-211.456-288-436.8-288zm0 64a224 224 0 1 1 0 448 224 224 0 0 1 0-448zm0 64a160.192 160.192 0 0 0-160 160c0 88.192 71.744 160 160 160s160-71.808 160-160-71.744-160-160-160z"/></svg><b>查看</b></span><span class="op"><svg class="ic " viewBox="0 0 1024 1024" width="14" height="14" style="" fill="currentColor"><path d="m199.04 672.64 193.984 112 224-387.968-193.92-112-224 388.032zm-23.872 60.16 32.896 148.288 144.896-45.696L175.168 732.8zM455.04 229.248l193.92 112 56.704-98.112-193.984-112-56.64 98.112zM104.32 708.8l384-665.024 304.768 175.936L409.152 884.8h.064l-248.448 78.336L104.32 708.8zm384 254.272v-64h448v64h-448z"/></svg><b>编辑</b></span><span class="op"><svg class="ic " viewBox="0 0 1024 1024" width="14" height="14" style="" fill="currentColor"><path d="M771.776 794.88A384 384 0 0 1 128 512h64a320 320 0 0 0 555.712 216.448H654.72a32 32 0 1 1 0-64h149.056a32 32 0 0 1 32 32v148.928a32 32 0 1 1-64 0v-50.56zM276.288 295.616h92.992a32 32 0 0 1 0 64H220.16a32 32 0 0 1-32-32V178.56a32 32 0 0 1 64 0v50.56A384 384 0 0 1 896.128 512h-64a320 320 0 0 0-555.776-216.384z"/></svg><b>重置密码</b></span><span class="op"><svg class="ic " viewBox="0 0 1024 1024" width="14" height="14" style="" fill="currentColor"><path d="M160 256H96a32 32 0 0 1 0-64h256V95.936a32 32 0 0 1 32-32h256a32 32 0 0 1 32 32V192h256a32 32 0 1 1 0 64h-64v672a32 32 0 0 1-32 32H192a32 32 0 0 1-32-32V256zm448-64v-64H416v64h192zM224 896h576V256H224v640zm192-128a32 32 0 0 1-32-32V416a32 32 0 0 1 64 0v320a32 32 0 0 1-32 32zm192 0a32 32 0 0 1-32-32V416a32 32 0 0 1 64 0v320a32 32 0 0 1-32 32z"/></svg><b>删除</b></span></td></tr></tbody>
   </table>
  </div>
  <div class="pager">
   <span class="total">共 <span class="en">2000</span> 条</span>
   <span class="sel"><span style="margin-right:26px">10条/页</span><svg class="ic selarr" viewBox="0 0 1024 1024" width="14" height="14" style="" fill="currentColor"><path d="M831.872 340.864 512 652.672 192.128 340.864a30.592 30.592 0 0 0-42.752 0 29.12 29.12 0 0 0 0 41.6L489.664 714.24a32 32 0 0 0 44.672 0l340.288-331.712a29.12 29.12 0 0 0 0-41.728 30.592 30.592 0 0 0-42.752 0z"/></svg></span>
   <span class="pb dis"><svg class="ic " viewBox="0 0 1024 1024" width="12" height="12" style="" fill="currentColor"><path d="M609.408 149.376 277.76 489.6a32 32 0 0 0 0 44.672l331.648 340.352a29.12 29.12 0 0 0 41.728 0 30.592 30.592 0 0 0 0-42.752L339.264 511.936l311.872-319.872a30.592 30.592 0 0 0 0-42.688 29.12 29.12 0 0 0-41.728 0z"/></svg></span><span class="pb act">1</span><span class="pb">2</span><span class="pb">3</span><span class="pb">4</span><span class="pb">5</span><span class="pb">6</span><span class="pb">...</span><span class="pb">200</span><span class="pb"><svg class="ic " viewBox="0 0 1024 1024" width="12" height="12" style="" fill="currentColor"><path d="M340.864 149.312a30.592 30.592 0 0 0 0 42.752L652.736 512 340.864 831.872a30.592 30.592 0 0 0 0 42.752 29.12 29.12 0 0 0 41.728 0L714.24 534.336a32 32 0 0 0 0-44.672L382.592 149.376a29.12 29.12 0 0 0-41.728 0z"/></svg></span>
   <span style="margin-left:16px">前往</span><span class="sel" style="width:56px;margin:0 8px">1</span><span style="position:absolute;right:0;top:6px">页</span>
  </div>
  <div class="cover" style="left:1286.5px;top:623px;width:361.3px;height:80px"></div>
 </div>
 </div>
<div class="footer">2022 © Geeker-Admin By Geeker Technology.</div>

</div>
</div>
</body></html>
